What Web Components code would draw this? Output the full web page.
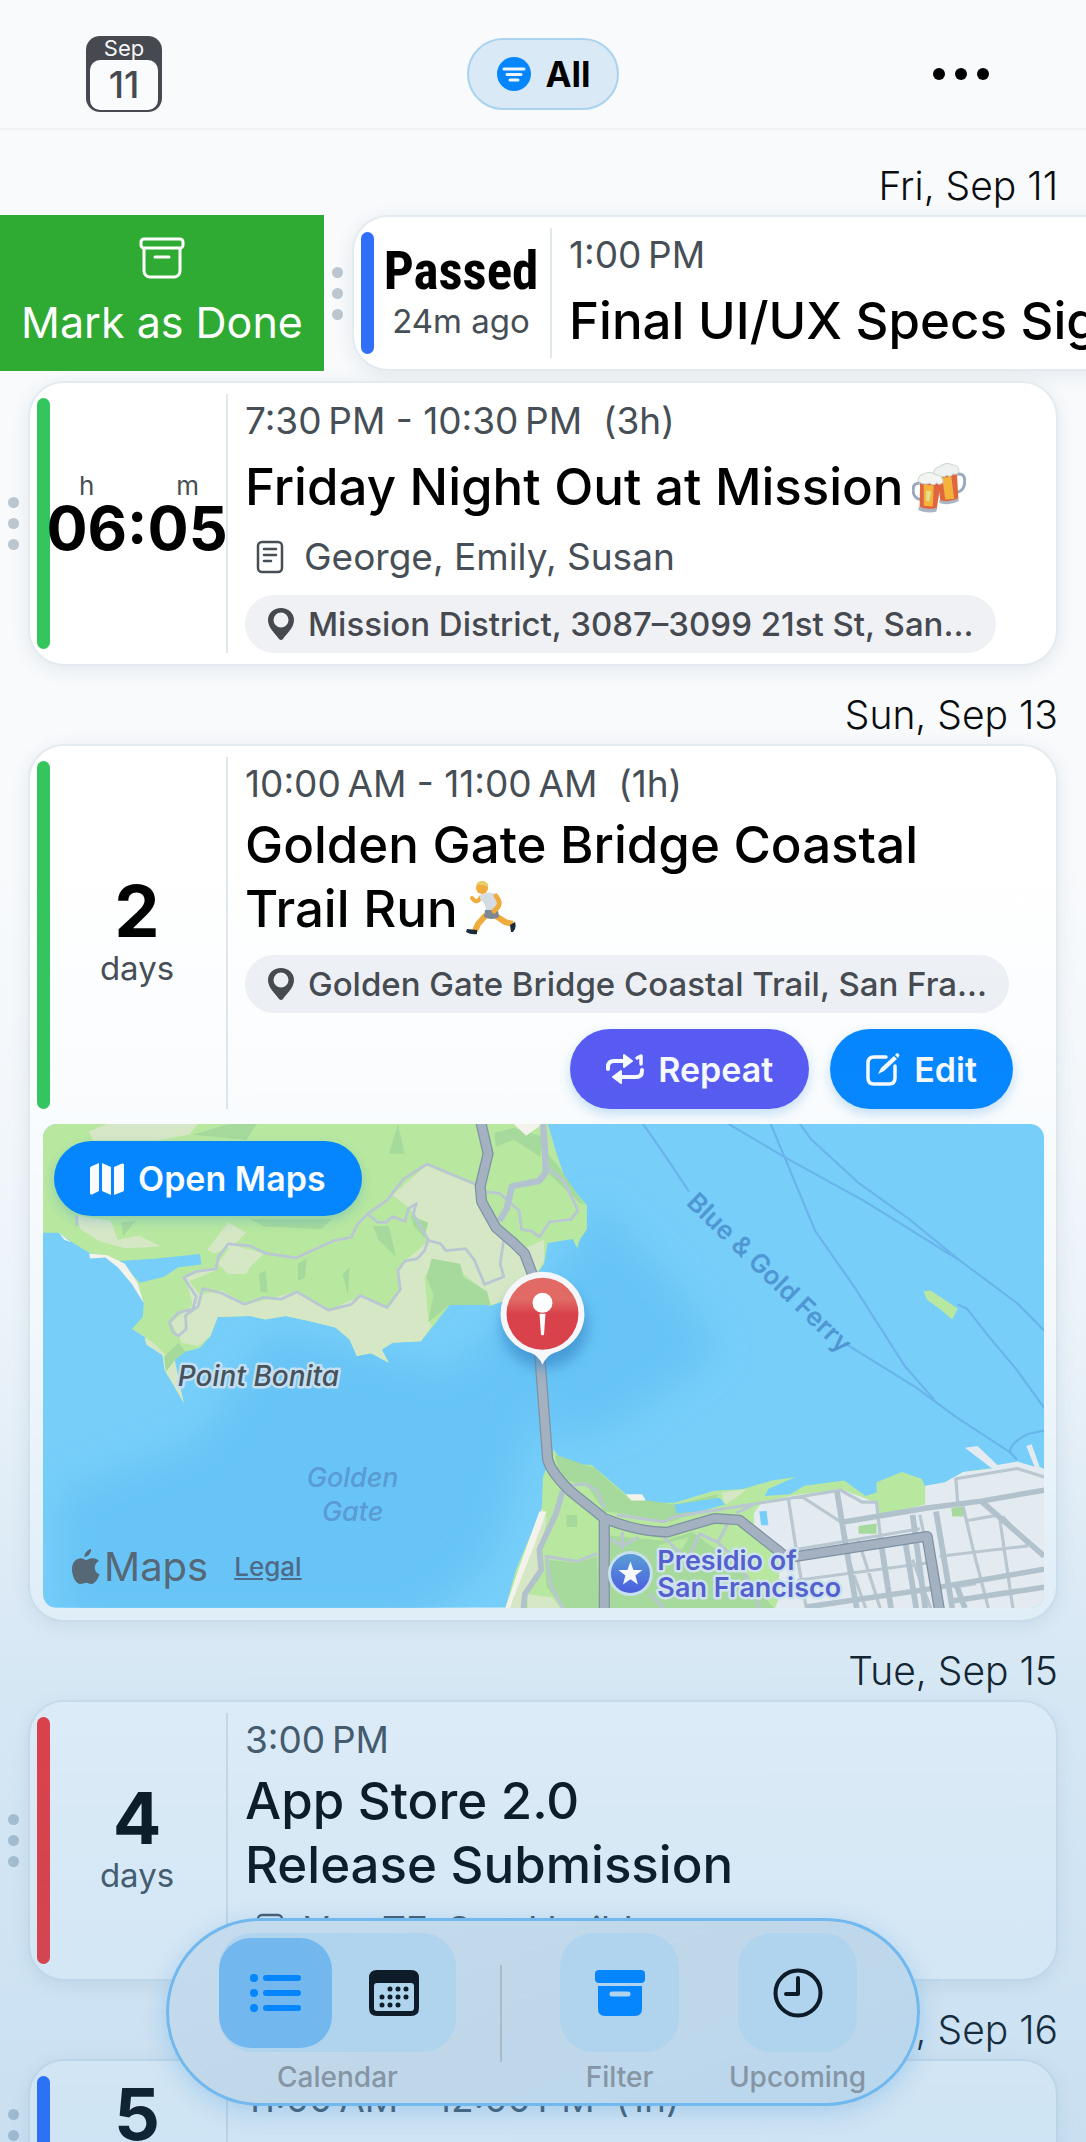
<!DOCTYPE html>
<html lang="en">
<head>
<meta charset="utf-8">
<meta name="viewport" content="width=device-width, initial-scale=1">
<title>Events</title>
<style>
  html, body {
    margin: 0;
    height: 100%;
  }
  body {
    font-family: Inter, "Liberation Sans", sans-serif;
    color: #000;
    background: #f8fafc;
    overflow: hidden;
  }
</style>
</head>
<body>
<planner-app>
  <app-header slot="header" month="Sep" day="11" filter="All"></app-header>

  <day-section label="Fri, Sep 11">
    <event-card swiped color="#2f6ffa" time="1:00&#8201;PM" count="Passed" unit="24m ago">
      <span slot="title">Final UI/UX Specs Sign-off</span>
    </event-card>
    <event-card color="#34c65d" time="7:30&#8201;PM - 10:30&#8201;PM &nbsp;(3h)" hours="06" minutes="05" note="George, Emily, Susan" place="Mission District, 3087–3099 21st St, San...">
      <span slot="title">Friday Night Out at Mission<ui-icon name="beer"></ui-icon></span>
    </event-card>
  </day-section>

  <day-section label="Sun, Sep 13">
    <event-card fixed color="#34c65d" time="10:00&#8201;AM - 11:00&#8201;AM &nbsp;(1h)" count="2" unit="days" place="Golden Gate Bridge Coastal Trail, San Fra...">
      <span slot="title">Golden Gate Bridge Coastal<br>Trail Run<ui-icon name="runner"></ui-icon></span>
      <pill-button slot="actions" icon="repeat" tone="violet">Repeat</pill-button>
      <pill-button slot="actions" icon="edit">Edit</pill-button>
      <event-map slot="map"></event-map>
    </event-card>
  </day-section>

  <day-section label="Tue, Sep 15">
    <event-card color="#fd2f2b" time="3:00&#8201;PM" count="4" unit="days" note="Ver. TF, Send build">
      <span slot="title">App Store 2.0<br>Release Submission</span>
    </event-card>
  </day-section>

  <day-section label="Wed, Sep 16">
    <event-card color="#2468ff" time="11:00&#8201;AM - 12:00&#8201;PM &nbsp;(1h)" count="5" unit="days"></event-card>
  </day-section>

  <tab-bar slot="tabs"></tab-bar>
</planner-app>

<script>
const ICONS = {
  filter: ['0 0 34 34', `
    <circle cx="17" cy="17" r="17" fill="#0586ff"/>
    <path d="M7 12h20M10 17.500h14M13 23h8" stroke="#eef6fd" stroke-width="3" stroke-linecap="round"/>`],
  more: ['0 0 58 14', `
    <circle cx="7" cy="7" r="6"/><circle cx="29" cy="7" r="6"/><circle cx="51" cy="7" r="6"/>`],
  archive: ['0 0 46 42', `
    <g fill="none" stroke="currentColor" stroke-width="3">
      <rect x="2" y="2" width="42" height="9" rx="3"/>
      <path d="M5 11v23a6 6 0 0 0 6 6h24a6 6 0 0 0 6-6V11"/>
      <path d="M16 20h14" stroke-linecap="round"/>
    </g>`],
  note: ['0 0 28 34', `
    <g fill="none" stroke="currentColor" stroke-width="2.500" stroke-linecap="round">
      <rect x="2" y="2" width="24" height="30" rx="4"/>
      <path d="M8 9h12M8 15h12M8 21h7"/>
    </g>`],
  pin: ['0 0 26 32', `
    <path fill="currentColor" fill-rule="evenodd" d="M13 0C5.500 0 0 5 0 12c0 8 7 13 11 19q2 2 4 0c4-6 11-11 11-19C26 5 20.500 0 13 0zm0 4.500a7.500 7.500 0 1 1 0 15 7.500 7.500 0 0 1 0-15z"/>`],
  repeat: ['0 0 38 32', `
    <g fill="none" stroke="currentColor" stroke-width="4" stroke-linecap="round" stroke-linejoin="round">
      <path d="M2 16v-2q0-6 6-6h11"/>
      <path d="M36 17v1q0 6-6 6H16"/>
      <path d="M31 5l4-2v8" stroke-width="3.500"/>
    </g>
    <path fill="currentColor" stroke="currentColor" stroke-width="2" stroke-linejoin="round" d="M18 2v12l8-6zM15 18v12l-8-6z"/>`],
  edit: ['0 0 34 34', `
    <g fill="none" stroke="currentColor" stroke-width="3.500" stroke-linecap="round" stroke-linejoin="round">
      <path d="M20 5H8q-6 0-6 6v15q0 6 6 6h15q6 0 6-6V14"/>
    </g>
    <path fill="currentColor" d="M12 22l3-6L28 4l3 3-13 12zM29 3l2-2q2 0 2.500 2.500L32 6z"/>`],
  map: ['0 0 34 32', `
    <path fill="currentColor" d="M0 5q0-1 1-1.500L9 0v28l-7 3.500Q0 32 0 30zM12 0l9 4v28l-9-4zM24 4l8-3.500Q34 0 34 2v25q0 1-1 1.500L24 32z"/>`],
  list: ['0 0 52 38', `
    <g fill="currentColor">
      <circle cx="4" cy="4" r="4"/><circle cx="4" cy="19" r="4"/><circle cx="4" cy="34" r="4"/>
      <rect x="13" y="1" width="38" height="6" rx="3"/>
      <rect x="13" y="16" width="38" height="6" rx="3"/>
      <rect x="13" y="31" width="38" height="6" rx="3"/>
    </g>`],
  calendar: ['0 0 50 46', `
    <path fill="currentColor" fill-rule="evenodd" d="M8 0h34q8 0 8 8v30q0 8-8 8H8q-8 0-8-8V8q0-8 8-8zM8 13q-3 0-3 3v22q0 3 3 3h34q3 0 3-3V16q0-3-3-3z"/>
    <g stroke="currentColor" stroke-width="5" stroke-linecap="round" stroke-dasharray="0 8">
      <path d="M21 19h17M13 27h25M13 35h17"/>
    </g>`],
  box: ['0 0 50 46', `
    <rect width="50" height="13" rx="4" fill="currentColor"/>
    <path fill="currentColor" fill-rule="evenodd" d="M3 16h44v23q0 7-7 7H10q-7 0-7-7zM17 21.500a2.500 2.500 0 0 0 0 5h16a2.500 2.500 0 0 0 0-5z"/>`],
  clock: ['0 0 50 50', `
    <g fill="none" stroke="currentColor" stroke-width="4" stroke-linecap="round" stroke-linejoin="round">
      <circle cx="25" cy="25" r="22.500"/>
      <path d="M25 10v16H13"/>
    </g>`],
  apple: ['0 0 28 36', `
    <path fill="currentColor" d="M19 0c.300 4-3 8-6.500 8C12.200 4 16 .500 19 0zM14 11c1.500 0 4-2 7-1.700 2.500.100 4.500 1 5.800 2.700-6 3.500-5 11 .700 13.300C26 30 23 35 19.500 35c-2 0-3-1.300-5.200-1.300S10.500 35 8.500 35C4 35 0 27 0 20.500 0 13 4.500 9.300 9 9.300c2 0 3.500 1.700 5 1.700z"/>`],
  beer: ['0 0 54 50', `
    <g transform="rotate(-5 38 22)">
      <path d="M46 12q8-1 7 8t-9 10" fill="none" stroke="#9aa9bb" stroke-width="3"/>
      <path d="M26 10h20l-1 28q-9 4-18 0z" fill="#e0663f"/>
      <path d="M31 14h9l1 22h-9z" fill="#f3b33d"/>
      <path d="M26 36q9 4 19 0v3q-9 4-19 0z" fill="#a9b5c4"/>
      <path d="M23 10q-1-6 6-7 7-5 13-1 7 1 6 8-3 3-6 1-3 4-6 1-6 3-13-2z" fill="#eef1f0" stroke="#cdd8cf"/>
    </g>
    <g transform="rotate(5 16 30)">
      <path d="M7 21q-7 0-6 8t9 8" fill="none" stroke="#9aa9bb" stroke-width="3"/>
      <path d="M7 18h21l-2 28q-9 4-17 0z" fill="#e0663f"/>
      <path d="M11 22h10l1 21h-9z" fill="#f3b33d"/>
      <path d="M14 28h5l-1 10h-3z" fill="#dfe28f"/>
      <path d="M8 44q9 4 18 0v4q-9 3-18 0z" fill="#a9b5c4"/>
      <path d="M5 19q-1-6 6-8 6-3 11 0 8 1 8 7-3 4-6 1-3 4-7 1-6 3-12-1z" fill="#f3f5f3" stroke="#cdd8cf"/>
    </g>`],
  runner: ['0 0 50 54', `
    <path d="M20 34l-8 9-3 7" fill="none" stroke="#f0ac3c" stroke-width="6" stroke-linejoin="round"/>
    <path d="M30 35l9 6 8 2" fill="none" stroke="#f0ac3c" stroke-width="6" stroke-linejoin="round"/>
    <path d="M1 48l10 1v4q-6 1-11-2zM44 44l5-3q2 6-2 10h-2z" fill="#1b2a38"/>
    <path d="M15 16q-4 8-9 1" fill="none" stroke="#f0ac3c" stroke-width="4" stroke-linecap="round"/>
    <path d="M14 14q9-5 17 0l-1 16H20q0-8-6-12z" fill="#d5dce2"/>
    <path d="M19 29h13l1 7q-7 4-15 0z" fill="#7c8792"/>
    <path d="M30 15q5 6 2 11l-4 4" fill="none" stroke="#f0ac3c" stroke-width="5" stroke-linecap="round"/>
    <circle cx="16" cy="7" r="6" fill="#f0ac3c"/>
    <path d="M10 4q2-5 8-4 5 2 4 6-6-3-12-2z" fill="#e9cd6a"/>`]
};

class UiIcon extends HTMLElement {
  constructor() {
    super();
    this.attachShadow({ mode: 'open' });
  }

  connectedCallback() {
    const [box, body] = ICONS[this.getAttribute('name')];
    const [, , width, height] = box.split(' ');
    this.shadowRoot.innerHTML = `
      <style>
        :host {
          display: inline-block;
          flex: none;
        }
        :host([name="beer"]),
        :host([name="runner"]) {
          margin-left: 8px;
          vertical-align: -8px;
        }
        svg {
          display: block;
        }
      </style>
      <svg width="${width}" height="${height}" viewBox="${box}" aria-hidden="true">${body}</svg>
    `;
  }
}

class PlannerApp extends HTMLElement {
  constructor() {
    super();
    this.attachShadow({ mode: 'open' });
    this.shadowRoot.innerHTML = `
      <style>
        :host {
          display: block;
          position: relative;
          height: 100vh;
          overflow: hidden;
        }
        main {
          padding-top: 7px;
        }
        .tint {
          position: absolute;
          inset: 0;
          pointer-events: none;
          background: linear-gradient(to bottom,
            rgba(63, 147, 210, 0) 40%,
            rgba(63, 147, 210, 0.03) 52%,
            rgba(63, 147, 210, 0.07) 62%,
            rgba(63, 147, 210, 0.14) 72%,
            rgba(63, 147, 210, 0.18) 78%,
            rgba(63, 147, 210, 0.25) 100%);
        }
        .tabs {
          position: absolute;
          z-index: 2;
          left: 0;
          right: 0;
          bottom: 36px;
          display: flex;
          justify-content: center;
        }
      </style>
      <slot name="header"></slot>
      <main><slot></slot></main>
      <div class="tint"></div>
      <div class="tabs"><slot name="tabs"></slot></div>
    `;
  }
}

class AppHeader extends HTMLElement {
  constructor() {
    super();
    this.attachShadow({ mode: 'open' });
  }

  connectedCallback() {
    this.shadowRoot.innerHTML = `
      <style>
        :host {
          display: block;
          border-bottom: 2px solid #eef2f5;
        }
        header {
          display: grid;
          grid-template-columns: 1fr auto 1fr;
          align-items: center;
          height: 128px;
          padding: 20px 86px 0;
          box-sizing: border-box;
        }
        button {
          font: inherit;
          color: inherit;
          padding: 0;
          border: none;
          background: none;
        }
        .today {
          display: flex;
          flex-direction: column;
          width: 76px;
          height: 76px;
          padding: 0 4px 4px;
          border-radius: 14px;
          background: #464a50;
          box-sizing: border-box;
          overflow: hidden;
        }
        .month {
          font-size: 22px;
          line-height: 24px;
          color: #f3f6f9;
        }
        .day {
          flex: 1;
          border-radius: 10px;
          background: #fafbfd;
          color: #464a50;
          font-size: 37px;
          font-weight: 500;
          line-height: 50px;
        }
        .filter {
          display: flex;
          align-items: center;
          gap: 14px;
          height: 72px;
          padding: 0 26px 0 28px;
          border: 2px solid #a9d3ef;
          border-radius: 36px;
          background: #d9eaf6;
          font-size: 35px;
          font-weight: 700;
          box-sizing: border-box;
        }
        .more {
          justify-self: end;
          display: flex;
          padding: 20px 10px;
        }
      </style>
      <header>
        <button class="today" aria-label="Today">
          <span class="month">${this.getAttribute('month')}</span>
          <span class="day">${this.getAttribute('day')}</span>
        </button>
        <button class="filter"><ui-icon name="filter"></ui-icon>${this.getAttribute('filter')}</button>
        <button class="more" aria-label="More"><ui-icon name="more"></ui-icon></button>
      </header>
    `;
  }
}

class DaySection extends HTMLElement {
  constructor() {
    super();
    this.attachShadow({ mode: 'open' });
  }

  connectedCallback() {
    this.shadowRoot.innerHTML = `
      <style>
        :host {
          display: block;
        }
        h2 {
          margin: 0;
          padding: 25px 28px 5px;
          font-size: 39px;
          font-weight: 300;
          line-height: 48px;
          text-align: right;
          color: #0a0d10;
        }
        .events {
          display: flex;
          flex-direction: column;
          gap: 10px;
        }
      </style>
      <h2>${this.getAttribute('label')}</h2>
      <div class="events"><slot></slot></div>
    `;
  }
}

class EventCard extends HTMLElement {
  constructor() {
    super();
    this.attachShadow({ mode: 'open' });
  }

  countdown() {
    if (this.hasAttribute('hours')) {
      return `
        <div class="units"><span>h</span><span>m</span></div>
        <strong class="clock">${this.getAttribute('hours')}:${this.getAttribute('minutes')}</strong>
      `;
    }
    const count = this.getAttribute('count');
    const kind = isNaN(count) ? 'word' : 'number';
    return `
      <strong class="${kind}">${count}</strong>
      <span class="unit">${this.getAttribute('unit')}</span>
    `;
  }

  connectedCallback() {
    const note = this.getAttribute('note');
    const place = this.getAttribute('place');
    const hasMap = this.querySelector('[slot="map"]');
    const hasTitle = this.querySelector('[slot="title"]');

    this.shadowRoot.innerHTML = `
      <style>
        :host {
          display: flex;
          overflow-x: clip;
          --gutter: 28px;
        }
        .done {
          flex: none;
          display: flex;
          flex-direction: column;
          align-items: center;
          gap: 17px;
          width: 324px;
          padding: 22px 0 0;
          border: none;
          background: #2faa33;
          color: #fff;
          font: inherit;
          font-size: 43px;
          line-height: 52px;
          font-weight: 400;
          box-sizing: border-box;
        }
        .handle {
          flex: none;
          display: flex;
          flex-direction: column;
          align-items: center;
          justify-content: center;
          gap: 10px;
          width: var(--gutter);
          padding-right: 2px;
          box-sizing: border-box;
        }
        .handle i {
          width: 11px;
          height: 11px;
          border-radius: 50%;
          background: #bcc7d0;
        }
        :host([fixed]) .handle i {
          visibility: hidden;
        }
        article {
          flex: none;
          width: calc(100vw - 2 * var(--gutter));
          border: 2px solid #e4ebf0;
          border-radius: 36px;
          background: #fff;
          box-shadow: 0 4px 18px rgba(50, 80, 110, 0.1);
          box-sizing: border-box;
        }
        .body {
          display: flex;
          min-height: 150px;
          padding: 11px 0 11px 7px;
          box-sizing: border-box;
        }
        .bar {
          flex: none;
          width: 13px;
          margin: 4px 0;
          border-radius: 7px;
          background: ${this.getAttribute('color')};
        }
        .countdown {
          flex: none;
          width: 178px;
          display: flex;
          flex-direction: column;
          align-items: center;
          justify-content: center;
          padding-right: 2px;
          border-right: 2px solid #e1e8ed;
          box-sizing: border-box;
          white-space: nowrap;
        }
        .number {
          font-size: 72px;
          line-height: 70px;
        }
        .word {
          font-family: "Liberation Sans Narrow", "Roboto Condensed", "Liberation Sans", sans-serif;
          font-size: 53px;
          line-height: 56px;
        }
        .clock {
          font-size: 61px;
          line-height: 52px;
        }
        .unit {
          font-size: 33px;
          line-height: 44px;
          color: #464e56;
        }
        .units {
          display: flex;
          justify-content: space-between;
          align-self: stretch;
          margin-top: -24px;
          padding: 0 25px 0 29px;
          font-size: 26px;
          line-height: 32px;
          color: #464e56;
        }
        .info {
          flex: 1;
          min-width: 0;
          padding: 4px 43px 0 17px;
        }
        time {
          display: block;
          font-size: 37px;
          line-height: 46px;
          color: #464e56;
        }
        h3 {
          display: flex;
          flex-direction: column;
          justify-content: center;
          min-height: 74px;
          margin: 6px 0 0;
          font-size: 51px;
          font-weight: 500;
          line-height: 64px;
          white-space: nowrap;
        }
        ::slotted(span) {
          display: block;
        }
        .note {
          display: flex;
          align-items: center;
          gap: 20px;
          margin: 9px 0 14px;
          padding-left: 11px;
          font-size: 37px;
          line-height: 48px;
          color: #464e56;
        }
        .place {
          display: inline-flex;
          align-items: center;
          gap: 14px;
          height: 58px;
          margin-top: 14px;
          padding: 0 22px 0 23px;
          border-radius: 29px;
          background: #eff1f4;
          color: #464a50;
          font-size: 33px;
          font-weight: 500;
          white-space: nowrap;
          vertical-align: top;
          box-sizing: border-box;
        }
        .note + .place {
          margin-top: 0;
        }
        .actions {
          display: flex;
          justify-content: flex-end;
          gap: 21px;
          padding-top: 16px;
        }
        .mapped {
          padding-bottom: 15px;
        }
        .mapped .bar {
          margin-bottom: 0;
        }
        .map {
          padding: 0 12px 12px 13px;
        }
      </style>
      ${this.hasAttribute('swiped') ? '<button class="done"><ui-icon name="archive"></ui-icon>Mark as Done</button>' : ''}
      <div class="handle"><i></i><i></i><i></i></div>
      <article>
        <div class="body ${hasMap ? 'mapped' : ''}">
          <div class="bar"></div>
          <div class="countdown">${this.countdown()}</div>
          <div class="info">
            <time>${this.getAttribute('time')}</time>
            ${hasTitle ? '<h3><slot name="title"></slot></h3>' : ''}
            ${note ? `<div class="note"><ui-icon name="note"></ui-icon>${note}</div>` : ''}
            ${place ? `<div class="place"><ui-icon name="pin"></ui-icon>${place}</div>` : ''}
            ${hasMap ? '<div class="actions"><slot name="actions"></slot></div>' : ''}
          </div>
        </div>
        ${hasMap ? '<div class="map"><slot name="map"></slot></div>' : ''}
      </article>
    `;
  }
}

class PillButton extends HTMLElement {
  constructor() {
    super();
    this.attachShadow({ mode: 'open' });
  }

  connectedCallback() {
    this.shadowRoot.innerHTML = `
      <style>
        :host {
          display: block;
        }
        button {
          display: flex;
          align-items: center;
          gap: 14px;
          height: 80px;
          padding: 0 36px;
          border: none;
          border-radius: 40px;
          background: #0586ff;
          color: #fafcff;
          font: inherit;
          font-size: 34px;
          font-weight: 600;
          box-shadow: 0 5px 12px rgba(30, 130, 210, 0.25);
        }
        :host([tone="violet"]) button {
          background: #585af2;
        }
        :host([compact]) button {
          height: 75px;
        }
      </style>
      <button><ui-icon name="${this.getAttribute('icon')}"></ui-icon><span><slot></slot></span></button>
    `;
  }
}

class EventMap extends HTMLElement {
  constructor() {
    super();
    this.attachShadow({ mode: 'open' });
  }

  connectedCallback() {
    this.shadowRoot.innerHTML = `
      <style>
        :host {
          display: block;
          position: relative;
          z-index: 1;
          border-radius: 14px;
          overflow: hidden;
        }
        svg.chart {
          display: block;
          width: 100%;
          height: auto;
        }
        .open {
          position: absolute;
          left: 11px;
          top: 17px;
        }
        .credit {
          position: absolute;
          left: 29px;
          bottom: 16px;
          display: flex;
          align-items: center;
          gap: 4px;
          font-size: 40px;
          line-height: 50px;
          color: #566775;
        }
        a {
          margin-left: 22px;
          font-size: 26px;
          font-weight: 500;
          color: #4d6b88;
        }
        .halo {
          paint-order: stroke;
          stroke-width: 5px;
          stroke-linejoin: round;
        }
      </style>
      <svg class="chart" viewBox="43 1122 1002 484" role="img" aria-label="Map of the Golden Gate">
        <defs>
          <linearGradient id="red" x1="0" y1="0" x2="0" y2="1">
            <stop offset="0.3" stop-color="#e16a65"/>
            <stop offset="0.5" stop-color="#d9424b"/>
          </linearGradient>
          <linearGradient id="park" x1="0" y1="0" x2="0" y2="1">
            <stop offset="0" stop-color="#5a9fd6"/>
            <stop offset="1" stop-color="#4a5be0"/>
          </linearGradient>
          <filter id="soft"><feGaussianBlur stdDeviation="18"/></filter>
          <filter id="shade" x="-50%" y="-50%" width="200%" height="200%"><feGaussianBlur stdDeviation="7"/></filter>
        </defs>
        <rect x="43" y="1122" width="1002" height="484" fill="#76cef9"/>
        <path filter="url(#soft)" fill="#67c4f6" d="M60 1490L200 1440 270 1330 450 1370 560 1270 600 1200 680 1290 720 1350 620 1420 560 1440 540 1400 490 1560 420 1620H60z"/>

        <!-- headlands north of the bridge -->
        <g transform="translate(0 1100) scale(.3571 .3444)" stroke-linejoin="round">
          <path fill="#b8e8a0" d="M110 50V380H165L205 410 250 438 300 450 350 490 385 530 403 585 400 625 370 660 405 680 410 705 455 735 462 780 485 820 515 875 495 800 490 750 520 725 560 715 590 680 610 625 700 622 745 632 800 622 860 635 940 655 980 690 1000 738 1040 730 1090 758 1070 720 1100 700 1180 695 1215 650 1260 590 1340 585 1375 592 1410 580 1480 540 1525 470 1535 410 1605 398 1618 425 1625 400 1645 370V300L1587 230 1560 150 1532 50z"/>
          <path fill="#d6e7c6" d="M250 85L300 64H555L530 95 440 112H260zM215 330L310 345 330 400 390 388 450 420 350 425 280 405 225 370zM580 430L640 350 690 380 650 420 600 440zM610 470L650 415 740 440 700 480 690 500 640 500zM520 510L600 480 605 490 530 520 560 560 620 548 690 588 830 552 920 605 1010 565 1085 598 1120 550 1115 480 1200 405 1150 310 1100 270 1195 185 1340 245 1350 300 1410 380 1460 430 1525 400V460L1480 540 1410 580 1375 590 1365 555 1300 500 1260 465 1215 460 1190 510 1200 630 1210 650 1180 695 1100 700 1070 720 1090 758 1040 730 1000 738 980 690 940 655 860 635 800 622 745 632 700 622 610 625 590 680 555 710 510 700 480 640 540 590zM370 660L405 680 410 705 455 735 462 780 485 820 515 875 490 750 460 730 430 700z"/>
          <path fill="#a6da9c" d="M540 95L640 64H720L690 110zM1090 150L1115 64 1135 150zM1385 90L1440 75 1520 100 1515 160 1440 110 1390 130zM1535 150L1560 180 1640 300 1620 290 1540 210zM1210 455L1290 470 1300 510 1365 550 1375 590 1260 590 1200 640 1215 560 1195 510zM1045 360L1090 360 1110 450 1060 400zM1150 330L1200 350 1190 395 1160 360zM700 340H930L900 370 740 362zM340 350L380 345 345 390zM725 500L745 490 750 555 730 550zM835 470L860 455 855 510 835 520zM960 500L980 480 975 560zM460 740L500 700 520 725 490 750 465 785z"/>
          <path fill="#76cef9" d="M335 462L440 455 560 442 565 472 500 480 460 508 392 525z"/>
          <path fill="#f3f3ec" d="M165 380L200 408 180 400zM250 440L300 445 350 470 385 525 403 585 370 530 330 480 295 452 252 455zM1440 64H1520L1475 98z"/>
          <g fill="none" stroke="#b9c7d3" stroke-width="8">
            <path d="M215 330V360M540 605L550 565 515 510 550 492 605 485 612 450 640 412 700 418 745 440 830 453 935 403 985 393 1000 358 1030 325 1085 285 1130 225 1197 180 1270 212 1335 240"/>
            <path d="M1030 325L1060 350 1082 350 1100 333 1135 347 1145 310 1167 295 1158 325 1200 400 1190 432 1170 455 1135 462 1115 490 1122 545 1085 597 1010 562 985 588 920 605 832 552 788 573 738 568 685 588 620 555 568 542 555 595 520 620 522 660 500 680 485 670 475 640 500 612 540 602"/>
            <path d="M1200 402L1235 412 1250 432 1305 426 1330 460 1358 530 1412 508 1402 470 1412 400M1365 262L1400 265 1455 315 1462 370 1490 375 1512 392 1540 348 1600 342 1620 315 1580 230 1540 195"/>
          </g>
          <path fill="none" stroke="#b2c2d0" stroke-width="18" d="M1522 64L1528 150 1530 205 1510 230 1435 245 1420 310 1400 345"/>
          <path fill="none" stroke="#7f92a3" stroke-width="31" d="M1348 60L1368 150 1346 245 1350 290 1390 365 1440 410 1470 440 1492 500"/>
          <path fill="none" stroke="#a3b1c0" stroke-width="24" d="M1348 60L1368 150 1346 245 1350 290 1390 365 1440 410 1470 440 1492 500"/>
        </g>

        <!-- ferry lines, island and the city shore -->
        <g transform="translate(520 1100) scale(.361 .3444)" stroke-linejoin="round">
          <g fill="none" stroke="#69b4ea" stroke-width="6">
            <path d="M340 60L400 150 470 260M900 700L1100 830 1210 915 1360 1018 1380 1040M580 64L735 160 960 290 1220 460 1380 585 1455 665M695 60L735 160 820 375 930 540 1070 770 1150 865M775 60L810 110 940 235 1080 340 1220 460M1215 588L1240 600 1300 680 1380 780 1455 890M1360 1018Q1360 990 1410 965L1455 955"/>
          </g>
          <path fill="#b8e8a0" d="M1120 550L1140 548 1215 600 1200 632 1170 605 1130 575z"/>
          <path fill="#b8e8a0" d="M-42 1480L-10 1360 30 1260 62 1180 65 1090 95 1010 120 1050 200 1055 245 1095 300 1145 370 1165 430 1165 540 1130 620 1125 700 1100 765 1090 690 1125 680 1145 750 1140 790 1115 900 1100 960 1145 990 1135V1105L1060 1075 1115 1095 1125 1120 1180 1105 1230 1075 1300 1065 1400 1080 1460 1090V1480z"/>
          <path fill="#a6da9c" d="M100 1025L210 1065 300 1150 430 1170 550 1140 540 1175 420 1220 280 1195 235 1190 190 1120 110 1090zM70 1330L160 1340 215 1320 220 1471H120L75 1410zM250 1260L400 1275 480 1250 530 1290 600 1330 650 1400 705 1471H250zM130 1200H160V1235H130z"/>
          <path fill="#b8e8a0" d="M560 1240L700 1310 690 1360 610 1320zM380 1290L470 1265 450 1300z"/>
          <path fill="#d6e7c6" d="M-42 1480L62 1180 75 1210 60 1300 60 1360 15 1430 10 1480zM560 1135L630 1125 600 1150 570 1170zM20 1430L90 1440 120 1480H25z"/>
          <path fill="#f3f3ec" d="M-42 1480L0 1350 55 1190 75 1190 40 1290 -20 1450 -28 1480zM295 1140H340L350 1158H310z"/>
          <path fill="#e4ebf0" d="M650 1195L670 1165 750 1145 890 1125 990 1165 1000 1200 1125 1170V1115L1180 1105 1230 1075 1310 1065 1235 1005 1270 1000 1325 1055 1380 1045 1428 1060 1405 1000 1420 995 1442 1060 1460 1070V1480H705L720 1440 720 1320 650 1240z"/>
          <path fill="#76cef9" d="M430 1170L555 1150 570 1170 500 1190 435 1195zM665 1190L685 1188 690 1230 670 1230z"/>
          <path fill="#a6da9c" d="M940 1232L990 1225V1255H940zM1197 1180L1232 1175V1205H1200z"/>
          <g fill="none" stroke="#b9c7d0" stroke-width="9">
            <path d="M270 1200L400 1220 430 1205 670 1165 890 1128 950 1163 990 1163 1000 1260M745 1150L770 1320 795 1471M780 1145L890 1220M770 1300L1000 1260 1110 1240M940 1275L1000 1471M1215 1165L1210 1095 1380 1065 1455 1090M1235 1218L1330 1200M1230 1175L1260 1310 1300 1471M1330 1200L1368 1471M1165 1320L1410 1290M770 1390L1130 1340M1110 1200L1165 1471M905 1310L960 1471M140 1115L180 1110 215 1130 235 1180M250 1270L285 1290 330 1265M285 1250V1300M400 1265L465 1330 500 1255 550 1280 580 1220M550 1280L600 1330 640 1400 665 1471M70 1320L160 1335 215 1312M75 1320L85 1400 120 1471M360 1430L400 1471M1410 1285L1340 1205M600 1195L650 1170M1205 1410L1265 1400M1090 1330L1140 1471"/>
          </g>
          <g fill="none" stroke="#b2c2cc" stroke-width="16">
            <path d="M120 1130L100 1200 55 1300 60 1360 15 1430 10 1480M880 1130L905 1290 935 1471M890 1222L1130 1180 1280 1160 1455 1128M1280 1160L1455 1320M1000 1265L1030 1471M1070 1280L1100 1471M1155 1190L1200 1471M1090 1200L1125 1471M795 1468L1120 1418 1455 1358M1190 1452L1455 1410M1210 1400L1235 1471"/>
          </g>
          <g fill="none" stroke="#7f92a3" stroke-width="31">
            <path d="M55 720L78 1040Q90 1080 140 1130L235 1210Q330 1250 410 1250L540 1210 610 1215 730 1315M235 1210V1480M760 1322L1130 1262 1165 1480"/>
          </g>
          <g fill="none" stroke="#a3b1c0" stroke-width="24">
            <path d="M55 720L78 1040Q90 1080 140 1130L235 1210Q330 1250 410 1250L540 1210 610 1215 730 1315M235 1210V1480M760 1322L1130 1262 1165 1480"/>
          </g>
        </g>

        <g font-weight="500">
          <text class="halo" x="178" y="1384" font-size="28" font-style="italic" fill="#46525c" stroke="#c3dff0">Point Bonita</text>
          <g font-size="27" font-style="italic" fill="#5a9bd3" text-anchor="middle">
            <text x="353" y="1485">Golden</text>
            <text x="353" y="1519">Gate</text>
          </g>
          <text transform="translate(686 1202) rotate(44)" font-size="26" font-weight="600" fill="#4f97d3">Blue &amp; Gold Ferry</text>
          <g class="halo" font-size="27" font-weight="600" fill="#5560cf" stroke="#cfe3ee">
            <text x="658" y="1568">Presidio of</text>
            <text x="658" y="1595">San Francisco</text>
          </g>
        </g>
        <circle cx="631" cy="1572" r="21" fill="url(#park)" stroke="#c7e0ee" stroke-width="3"/>
        <path fill="#f5f9fd" d="M631 1560l3 8.500h9l-7 5.500 2.500 9-7.500-5.300-7.500 5.300 2.500-9-7-5.500h9z"/>

        <ellipse cx="545" cy="1324" rx="43" ry="42" fill="#2f7fc0" opacity=".6" filter="url(#shade)"/>
        <path fill="#f4f6f9" d="M543 1270a42 42 0 0 1 42 42c0 20-14 34-30 39q-8 3-12 12-4-9-12-12c-16-5-30-19-30-39a42 42 0 0 1 42-42z"/>
        <circle cx="543" cy="1312" r="36" fill="url(#red)"/>
        <circle cx="543" cy="1301" r="10" fill="#fff"/>
        <path fill="#fff" d="M540 1312h6l-1.500 21q-1.500 1-3 0z"/>
      </svg>
      <pill-button class="open" compact icon="map">Open Maps</pill-button>
      <div class="credit"><ui-icon name="apple"></ui-icon>Maps<a href="#legal">Legal</a></div>
    `;
  }
}

class TabBar extends HTMLElement {
  constructor() {
    super();
    this.attachShadow({ mode: 'open' });
    this.shadowRoot.innerHTML = `
      <style>
        :host {
          display: block;
        }
        nav {
          display: flex;
          align-items: flex-start;
          height: 188px;
          padding: 12px 60px 0 50px;
          border: 3px solid #70b8ee;
          border-radius: 94px;
          background: linear-gradient(160deg, #c5dcee, #c0d7ea 50%, #b9d7ee);
          box-shadow: 0 6px 24px rgba(70, 150, 215, 0.3);
          box-sizing: border-box;
        }
        .group {
          display: flex;
          flex-direction: column;
          align-items: center;
          gap: 7px;
          font-size: 28px;
          font-weight: 500;
          line-height: 36px;
          color: #8595a4;
          white-space: nowrap;
        }
        .tray {
          display: flex;
          align-items: center;
          height: 119px;
          border-radius: 34px;
          background: #b0d3ee;
        }
        .single {
          width: 119px;
        }
        button {
          display: flex;
          align-items: center;
          justify-content: center;
          width: 113px;
          height: 110px;
          padding: 0;
          border: none;
          border-radius: 32px;
          background: none;
          color: #0d1c28;
        }
        .tray .active {
          background: #72b7ee;
        }
        .tinted {
          color: #0586ff;
        }
        .month {
          width: 124px;
        }
        .single button {
          width: 119px;
        }
        .line {
          width: 2px;
          height: 97px;
          margin: 32px 58px 0 44px;
          background: #adbac7;
        }
        .filter {
          width: 119px;
          margin-right: 59px;
        }
        .upcoming {
          width: 119px;
        }
      </style>
      <nav>
        <div class="group">
          <div class="tray">
            <button class="active tinted" aria-label="List"><ui-icon name="list"></ui-icon></button>
            <button class="month" aria-label="Month"><ui-icon name="calendar"></ui-icon></button>
          </div>
          <span>Calendar</span>
        </div>
        <div class="line"></div>
        <div class="group filter">
          <div class="tray single">
            <button class="tinted" aria-labelledby="filter-label"><ui-icon name="box"></ui-icon></button>
          </div>
          <span id="filter-label">Filter</span>
        </div>
        <div class="group upcoming">
          <div class="tray single">
            <button aria-labelledby="upcoming-label"><ui-icon name="clock"></ui-icon></button>
          </div>
          <span id="upcoming-label">Upcoming</span>
        </div>
      </nav>
    `;
  }
}

customElements.define('ui-icon', UiIcon);
customElements.define('planner-app', PlannerApp);
customElements.define('app-header', AppHeader);
customElements.define('day-section', DaySection);
customElements.define('event-card', EventCard);
customElements.define('pill-button', PillButton);
customElements.define('event-map', EventMap);
customElements.define('tab-bar', TabBar);
</script>
</body>
</html>
